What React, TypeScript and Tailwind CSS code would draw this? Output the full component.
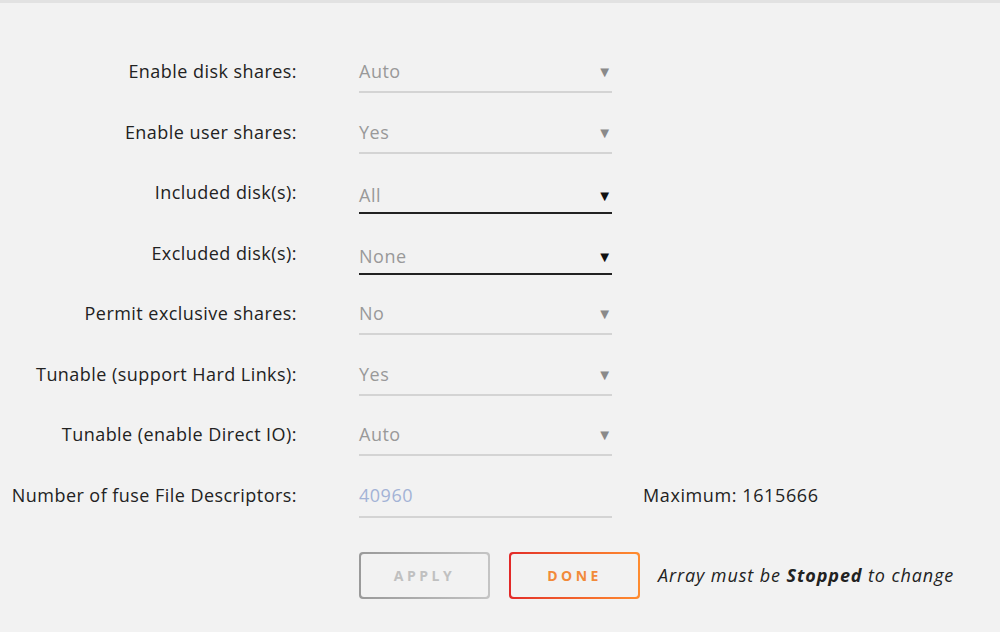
import type { ReactNode } from "react";

type Row = { label: string; value: string; dark?: boolean };

const rows: Row[] = [
  { label: "Enable disk shares:", value: "Auto" },
  { label: "Enable user shares:", value: "Yes" },
  { label: "Included disk(s):", value: "All", dark: true },
  { label: "Excluded disk(s):", value: "None", dark: true },
  { label: "Permit exclusive shares:", value: "No" },
  { label: "Tunable (support Hard Links):", value: "Yes" },
  { label: "Tunable (enable Direct IO):", value: "Auto" },
];

const FormRow = ({ label, children }: { label: string; children: ReactNode }) => (
  <div className="flex h-[60.5px] items-start">
    <div className="w-[297px] shrink-0 text-right text-[18px] leading-6 tracking-[0.45px] text-[#222]">{label}</div>
    <div className="ml-[62px] flex items-start">{children}</div>
  </div>
);

const Select = ({ value, dark }: { value: string; dark?: boolean }) => (
  <div
    className={
      dark
        ? "flex h-[34px] w-[253px] items-start justify-between border-b-2 border-[#222] pt-[3px]"
        : "flex h-[34px] w-[253px] items-start justify-between border-b-2 border-[#d4d4d4]"
    }
  >
    <span className="text-[18px] leading-6 tracking-[0.5px] text-[#999]">{value}</span>
    <span className={dark ? "text-[15px] leading-6 text-[#111]" : "text-[15px] leading-6 text-[#8a8a8a]"}>▼</span>
  </div>
);

export default function App() {
  return (
    <div
      className="min-h-[632px] w-[1000px] border-t-[3px] border-[#e2e2e2] bg-[#f2f2f2] pt-[56px]"
      style={{ fontFamily: '"Open Sans", "Noto Sans", sans-serif' }}
    >
      {rows.map((r) => (
        <FormRow key={r.label} label={r.label}>
          <Select value={r.value} dark={r.dark} />
        </FormRow>
      ))}

      <FormRow label="Number of fuse File Descriptors:">
        <div className="h-[35px] w-[253px] border-b-2 border-[#d4d4d4]">
          <span className="text-[18px] leading-6 tracking-[0.5px] text-[#a3b3d6]">40960</span>
        </div>
        <span className="ml-[31px] text-[18px] leading-6 tracking-[0.6px] text-[#222]">Maximum: 1615666</span>
      </FormRow>

      <div className="ml-[359px] mt-[9px] flex items-center">
        <div className="rounded-[4px] bg-gradient-to-r from-[#9a9a9a] to-[#c4c4c4] p-[2px]">
          <div className="flex h-[43px] w-[127px] items-center justify-center rounded-[3px] bg-[#f2f2f2] text-[14px] font-bold tracking-[3.5px] text-[#c0c0c0]">
            APPLY
          </div>
        </div>
        <div className="ml-[19px] rounded-[4px] bg-gradient-to-r from-[#e22828] to-[#ff8c2f] p-[2px]">
          <div className="flex h-[43px] w-[127px] items-center justify-center rounded-[3px] bg-[#f2f2f2] text-[14px] font-bold tracking-[3.5px] text-[#f28a3a]">
            DONE
          </div>
        </div>
        <span className="ml-[18px] text-[18px] italic tracking-[0.9px] text-[#222]">
          Array must be <b>Stopped</b> to change
        </span>
      </div>
    </div>
  );
}
